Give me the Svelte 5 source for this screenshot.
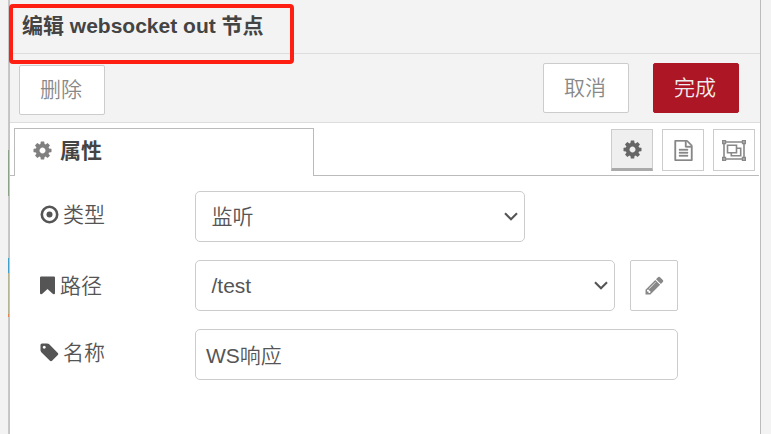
<script>
  const cog = 'M1152 896q0-106-75-181t-181-75-181 75-75 181 75 181 181 75 181-75 75-181zm512-109v222q0 12-8 23t-20 13l-185 28q-19 54-39 91 35 50 107 138 10 12 10 25t-9 23q-27 37-99 108t-94 71q-12 0-26-9l-138-108q-44 23-91 38-16 136-29 186-7 28-36 28h-222q-14 0-24.5-8.5t-11.5-21.5l-28-184q-49-16-90-37l-141 107q-10 9-25 9-14 0-25-11-126-114-165-168-7-10-7-23 0-12 8-23 15-21 51-66.5t54-70.5q-27-50-41-99l-183-27q-13-2-21-12.5t-8-23.5v-222q0-12 8-23t19-13l186-28q14-46 39-92-40-57-107-138-10-12-10-24 0-10 9-23 26-36 98.5-107.5t94.5-71.5q13 0 26 10l138 107q44-23 91-38 16-136 29-186 7-28 36-28h222q14 0 24.5 8.5t11.5 21.5l28 184q49 16 90 37l142-107q9-9 24-9 13 0 25 10 129 119 165 170 7 8 7 22 0 12-8 23-15 21-51 66.5t-54 70.5q26 50 41 98l183 28q13 2 21 12.5t8 23.5z';
  const fileText = 'M1596 380q28 28 48 76t20 88v1152q0 40-28 68t-68 28h-1344q-40 0-68-28t-28-68v-1600q0-40 28-68t68-28h896q40 0 88 20t76 48zm-444-244v376h376q-10-29-22-41l-313-313q-12-12-41-22zm384 1528v-1024h-416q-40 0-68-28t-28-68v-416h-768v1536h1280zm-1024-864q0-14 9-23t23-9h704q14 0 23 9t9 23v64q0 14-9 23t-23 9h-704q-14 0-23-9t-9-23v-64zm736 224q14 0 23 9t9 23v64q0 14-9 23t-23 9h-704q-14 0-23-9t-9-23v-64q0-14 9-23t23-9h704zm0 256q14 0 23 9t9 23v64q0 14-9 23t-23 9h-704q-14 0-23-9t-9-23v-64q0-14 9-23t23-9h704z';
  const bookmark = 'M1420 128q23 0 44 9 33 13 52.5 41t19.5 62v1289q0 34-19.5 62t-52.5 41q-19 8-44 8-48 0-83-32l-441-424-441 424q-36 33-83 33-23 0-44-9-33-13-52.5-41t-19.5-62v-1289q0-34 19.5-62t52.5-41q21-9 44-9h1048z';
  const tag = 'M576 448q0-53-37.5-90.5t-90.5-37.5-90.5 37.5-37.5 90.5 37.5 90.5 90.5 37.5 90.5-37.5 37.5-90.5zm1067 576q0 53-37 90l-491 492q-39 37-91 37-53 0-90-37l-715-716q-38-37-64.5-101t-26.5-117v-416q0-52 38-90t90-38h416q53 0 117 26.5t102 64.5l715 714q37 39 37 91z';
  const pencil = 'M491 1536l91-91-235-235-91 91v107h128v128h107zm523-928q0-22-22-22-10 0-17 7l-542 542q-7 7-7 17 0 22 22 22 10 0 17-7l542-542q7-7 7-17zm-54-192l416 416-832 832h-416v-416zm683 96q0 53-37 90l-166 166-416-416 166-165q36-38 90-38 53 0 91 38l235 234q37 39 37 91z';
</script>

{#snippet icon(d)}
  <svg class="icon" viewBox="0 0 1792 1792"><path {d} /></svg>
{/snippet}

{#snippet chevron()}
  <svg class="chevron" viewBox="0 0 14 9"><path d="M1 1.2l6 6 6-6" /></svg>
{/snippet}

<div class="page">
  <div class="workspace">
    <i class="green"></i><i class="blue"></i><i class="olive"></i><i class="orange"></i>
  </div>
  <main class="tray">
    <header>编辑 websocket out 节点</header>
    <div class="toolbar">
      <button class="btn delete">删除</button>
      <button class="btn cancel">取消</button>
      <button class="btn primary">完成</button>
    </div>
    <nav>
      <div class="tab">{@render icon(cog)}<span>属性</span></div>
      <div class="tools">
        <button class="tool active">{@render icon(cog)}</button>
        <button class="tool">{@render icon(fileText)}</button>
        <button class="tool">
          <svg class="group" viewBox="0 0 24 21">
            <path d="M4 2h16M4 19h16M2 4v13M22 4v13M.8.8h2.6v2.6H.8zM20.6.8h2.6v2.6h-2.6zM.8 17.6h2.6v2.6H.8zM20.6 17.6h2.6v2.6h-2.6zM5.5 5.3h9v7.4h-9zM15 8.3h3.7v7.4H9.3V13" />
          </svg>
        </button>
      </div>
    </nav>
    <form>
      <div class="row">
        <div class="label type">
          <svg class="icon" viewBox="0 0 21 21"><circle class="ring" cx="10.5" cy="10.5" r="7.7" /><circle cx="10.5" cy="10.5" r="3" /></svg>
          <span>类型</span>
        </div>
        <div class="field select short"><span>监听</span>{@render chevron()}</div>
      </div>
      <div class="row">
        <div class="label path">{@render icon(bookmark)}<span>路径</span></div>
        <div class="field select long"><span>/test</span>{@render chevron()}</div>
        <button type="button" class="edit">{@render icon(pencil)}</button>
      </div>
      <div class="row">
        <div class="label name">{@render icon(tag)}<span>名称</span></div>
        <div class="field input"><span>WS响应</span></div>
      </div>
    </form>
  </main>
  <div class="highlight"></div>
</div>

<style>
  :global(body) { overflow: hidden; }
  * { box-sizing: border-box; }
  .page {
    position: relative;
    display: flex;
    width: 771px;
    height: 434px;
    background: #f3f3f3;
    color: #555;
    font: 350 21px/30px "Liberation Sans", "Noto Sans CJK SC", sans-serif;
  }
  .workspace {
    width: 9px;
    display: flex;
    flex-direction: column;
    align-items: flex-end;
    background: linear-gradient(to right, transparent 8px, #c8c8c8 8px);
  }
  .workspace i { width: 1px; flex: none; }
  .green { height: 46px; margin-top: 150px; background: #8ca287; }
  .blue { height: 15px; margin-top: 62px; background: #3fa0cb; }
  .olive { height: 41px; background: #b5b596; }
  .orange { height: 3px; background: #df8650; }
  .tray {
    width: 752px;
    display: flex;
    flex-direction: column;
    background: #fff;
    border-left: 1px solid #c4c4c4;
    border-right: 1px solid #bbb;
  }
  header {
    height: 54px;
    padding: 11px 0 0 12px;
    background: #f3f3f3;
    border-bottom: 1px solid #ddd;
    color: #444;
    font-weight: 700;
  }
  .toolbar {
    display: flex;
    height: 69px;
    padding: 9px 21px 0 9px;
    background: #f3f3f3;
    border-bottom: 1px solid #ddd;
  }
  button {
    display: flex;
    align-items: center;
    justify-content: center;
    margin: 0;
    padding: 0;
    background: #fff;
    border: 1px solid #ccc;
    color: #888;
    font: inherit;
  }
  .btn { width: 86px; height: 50px; padding-right: 2px; border-radius: 2px; }
  .delete { margin-top: 2px; }
  .cancel { margin-left: auto; margin-right: 24px; }
  .primary { background: #ad1625; border-color: #ad1625; color: #eee; }
  nav { display: flex; height: 53px; padding-top: 5px; background: linear-gradient(#bbb, #bbb) 0 52px / 749px 1px no-repeat; }
  .tab {
    width: 300px;
    height: 48px;
    margin-left: 4px;
    padding: 0 0 4px 17px;
    display: flex;
    align-items: center;
    border: 1px solid #bbb;
    border-bottom: 0;
    background: #fff;
    color: #444;
    font-weight: 700;
  }
  .tab .icon { fill: #808080; margin-right: 7px; }
  .tools { display: flex; gap: 9px; margin: 1px 5px 0 auto; }
  .tool { width: 42px; height: 42px; }
  .active { background: #efefef; border-bottom: 3px solid #aaa; }
  .active .icon { fill: #666; }
  .icon { width: 21px; height: 21px; flex: none; fill: #555; }
  .tool:not(.active) .icon, .edit .icon { fill: #888; }
  .tool:not(.active) .icon { stroke: #888; stroke-width: 30; }
  .group { width: 24px; height: 21px; fill: none; stroke: #888; stroke-width: 1.6; }
  form { display: flex; flex-direction: column; gap: 18px; padding: 15px 0 0 29px; }
  .row { display: flex; height: 51px; }
  .label { display: flex; width: 156px; align-items: center; padding-bottom: 4px; }
  .type .icon, .name .icon { margin-right: 3px; }
  .path .icon { margin-left: -2px; margin-right: 2px; }
  .path { padding-bottom: 0; }
  .ring { fill: none; stroke: #555; stroke-width: 2.6; }
  .field { display: flex; align-items: center; height: 51px; border: 1px solid #ccc; border-radius: 5px; background: #fff; }
  .select { justify-content: space-between; padding: 0 6px 0 15.5px; }
  .short { width: 330px; }
  .long { width: 420px; }
  .input { width: 483px; padding: 2px 0 0 10px; }
  .chevron { width: 14px; height: 9px; fill: none; stroke: #555; stroke-width: 2.1; }
  .edit { width: 48px; height: 51px; margin-left: 15px; border-radius: 2px; }
  .highlight { position: absolute; left: 9px; top: 4px; width: 285px; height: 60px; border: 4px solid #ff1e12; border-radius: 4px; }
</style>
